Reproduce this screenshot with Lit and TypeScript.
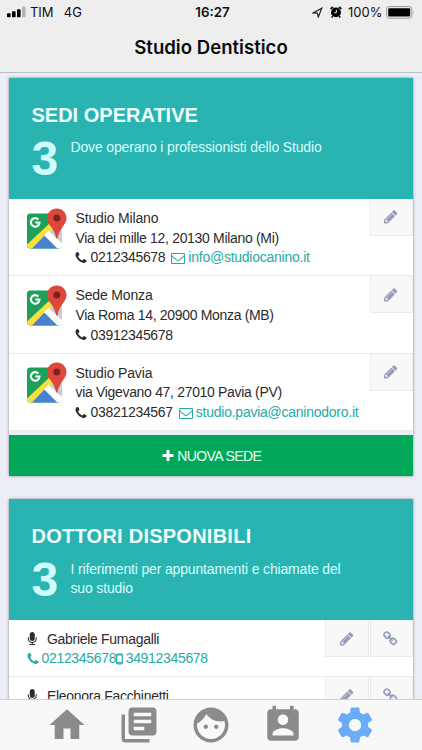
import { LitElement, html, svg, css } from "lit";
import { customElement, property } from "lit/decorators.js";

const fa: Record<string, string> = {
  phone: "M1600 1240q0 27-10 70.5t-21 68.5q-21 50-122 106-94 51-186 51-27 0-53-3.5t-57.5-12.5-47-14.5-55.5-20.5-49-18q-98-35-175-83-127-79-264-216t-216-264q-48-77-83-175-3-9-18-49t-20.5-55.5-14.5-47-12.5-57.5-3.5-53q0-92 51-186 56-101 106-122 25-11 68.5-21t70.5-10q14 0 21 3 18 6 53 76 11 19 30 54t35 63.5 31 53.5q3 4 17.5 25t21.5 35.5 7 28.5q0 20-28.5 50t-62 55-62 53-28.5 46q0 9 5 22.5t8.5 20.5 14 24 11.5 19q76 137 174 235t235 174q2 1 19 11.5t24 14 20.5 8.5 22.5 5q18 0 46-28.5t53-62 55-62 50-28.5q14 0 28.5 7t35.5 21.5 25 17.5q25 15 53.5 31t63.5 35 54 30q70 35 76 53 3 7 3 21z",
  mail: "M1664 1504v-768q-32 36-69 66-268 206-426 338-51 43-83 67t-86.5 48.5-102.5 24.5h-2q-48 0-102.5-24.5t-86.5-48.5-83-67q-158-132-426-338-37-30-69-66v768q0 13 9.5 22.5t22.5 9.5h1472q13 0 22.5-9.5t9.5-22.5zm0-1051v-24.5l-.5-13-3-12.5-5.5-9-9-7.5-14-2.5h-1472q-13 0-22.5 9.5t-9.5 22.5q0 168 147 284 193 152 401 317 6 5 35 29.5t46 37.5 44.5 31.5 50.5 27.5 43 9h2q20 0 43-9t50.5-27.5 44.5-31.5 46-37.5 35-29.5q208-165 401-317 54-43 100.5-115.5t46.5-131.5zm128-37v1088q0 66-47 113t-113 47h-1472q-66 0-113-47t-47-113v-1088q0-66 47-113t113-47h1472q66 0 113 47t47 113z",
  pencil: "M491 1536l91-91-235-235-91 91v107h128v128h107zm523-928q0-22-22-22-10 0-17 7l-542 542q-7 7-7 17 0 22 22 22 10 0 17-7l542-542q7-7 7-17zm-54-192l416 416-832 832h-416v-416zm683 96q0 53-37 90l-166 166-416-416 166-165q36-38 90-38 53 0 91 38l235 234q37 39 37 91z",
  plus: "M1600 736v192q0 40-28 68t-68 28h-416v416q0 40-28 68t-68 28h-192q-40 0-68-28t-28-68v-416h-416q-40 0-68-28t-28-68v-192q0-40 28-68t68-28h416v-416q0-40 28-68t68-28h192q40 0 68 28t28 68v416h416q40 0 68 28t28 68z",
  mic: "M1472 704v128q0 221-147.5 384.5t-364.5 187.5v132h256q26 0 45 19t19 45-19 45-45 19h-640q-26 0-45-19t-19-45 19-45 45-19h256v-132q-217-24-364.5-187.5t-147.5-384.5v-128q0-26 19-45t45-19 45 19 19 45v128q0 185 131.5 316.5t316.5 131.5 316.5-131.5 131.5-316.5v-128q0-26 19-45t45-19 45 19 19 45zm-256-384v512q0 132-94 226t-226 94-226-94-94-226v-512q0-132 94-226t226-94 226 94 94 226z",
  link: "M1456 1216q0-40-28-68l-208-208q-28-28-68-28-42 0-72 32 3 3 19 18.5t21.5 21.5 15 19 13 25.5 3.5 27.5q0 40-28 68t-68 28q-15 0-27.5-3.5t-25.5-13-19-15-21.5-21.5-18.5-19q-33 31-33 73 0 40 28 68l206 207q27 27 68 27 40 0 68-26l147-146q28-28 28-67zm-703-705q0-40-28-68l-206-207q-28-28-68-28-39 0-68 27l-147 146q-28 28-28 67 0 40 28 68l208 208q27 27 68 27 42 0 72-31-3-3-19-18.5t-21.5-21.5-15-19-13-25.5-3.5-27.5q0-40 28-68t68-28q15 0 27.5 3.5t25.5 13 19 15 21.5 21.5 18.5 19q33-31 33-73zm895 705q0 120-85 203l-147 146q-83 83-203 83-121 0-204-85l-206-207q-83-83-83-203 0-123 88-209l-88-88q-86 88-208 88-120 0-204-84l-208-208q-84-84-84-204t85-203l147-146q83-83 203-83 121 0 204 85l206 207q83 83 83 203 0 123-88 209l88 88q86-88 208-88 120 0 204 84l208 208q84 84 84 204z",
};

const icon = (name: string, cls = "") =>
  html`<svg class="fa ${cls}" viewBox="0 0 1792 1792">${svg`<path fill="currentColor" d=${fa[name]} />`}</svg>`;

const mobileIcon = html`<svg class="mobile" viewBox="0 0 7 12" fill="none" stroke="currentColor">
  <rect x=".7" y="1.2" width="5.6" height="9.6" rx=".8" stroke-width="1.2" /><path d="M.7 9.6h5.6M.7 2h5.6" stroke-width="1" />
</svg>`;

const mapIcon = html`<svg class="map" viewBox="0 0 40 42">
  <defs><clipPath id="tile"><rect x="0" y="5.5" width="35" height="35" rx="3" /></clipPath></defs>
  <g clip-path="url(#tile)">
    <path fill="#1fa05a" d="M0 5h36v36H0z" />
    <path fill="#c9cbd0" d="M18 23L36 5v36z" />
    <path fill="#f8df3d" d="M-1 37.5L23 15l4 5L4 43z" />
    <path fill="#4a80d0" d="M4.5 41L17.5 27.5 31 41z" />
    <path fill="#fff" d="M17 27.3l4.5-4.500L38 38v6h-4z" />
  </g>
  <path d="M11.3 11.400a4.300 4.300 0 1 0 1.200 3.100H8.300" fill="none" stroke="#fff" stroke-width="2.100" />
  <path fill="#dc483c" d="M29.8.5c5.5 0 9.700 4.200 9.700 9.600 0 3.900-2.200 6.400-4.400 9.500-2.600 3.700-3.800 6.600-4.500 10.200-.2 1.200-1.400 1.200-1.600 0-.7-3.600-1.900-6.500-4.500-10.200-2.200-3.100-4.400-5.600-4.400-9.500C20.100 4.700 24.300.5 29.800.5z" />
  <circle cx="29.8" cy="9.900" r="3.500" fill="#7d2220" />
</svg>`;

const tabs = [
  "M10 20v-6h4v6h5v-8h3L12 3 2 12h3v8z",
  "M4 6H2v14c0 1.1.9 2 2 2h14v-2H4V6zm16-4H8c-1.1 0-2 .9-2 2v12c0 1.1.9 2 2 2h12c1.1 0 2-.9 2-2V4c0-1.1-.9-2-2-2zm-1 9H9V9h10v2zm-4 4H9v-2h6v2zm4-8H9V5h10v2z",
  "M9 11.75c-.69 0-1.25.56-1.25 1.25s.56 1.25 1.25 1.25 1.25-.56 1.25-1.25-.56-1.25-1.25-1.25zm6 0c-.69 0-1.25.56-1.25 1.25s.56 1.25 1.25 1.25 1.25-.56 1.25-1.25-.56-1.25-1.25-1.25zM12 2C6.48 2 2 6.48 2 12s4.48 10 10 10 10-4.48 10-10S17.52 2 12 2zm0 18c-4.41 0-8-3.59-8-8 0-.29.02-.58.05-.86 2.36-1.05 4.23-2.98 5.21-5.37C11.07 8.33 14.05 10 17.42 10c.78 0 1.53-.09 2.25-.26.21.71.33 1.47.33 2.26 0 4.41-3.59 8-8 8z",
  "M19 3h-1V1h-2v2H8V1H6v2H5c-1.11 0-2 .9-2 2v14c0 1.1.89 2 2 2h14c1.1 0 2-.9 2-2V5c0-1.1-.9-2-2-2zm-7 3c1.66 0 3 1.34 3 3s-1.34 3-3 3-3-1.34-3-3 1.34-3 3-3zm6 12H6v-1c0-2 4-3.1 6-3.1s6 1.1 6 3.1v1z",
  "M19.43 12.98c.04-.32.07-.64.07-.98s-.03-.66-.07-.98l2.11-1.65c.19-.15.24-.42.12-.64l-2-3.46c-.12-.22-.39-.3-.61-.22l-2.49 1c-.52-.4-1.08-.73-1.69-.98l-.38-2.65C14.46 2.18 14.25 2 14 2h-4c-.25 0-.46.18-.49.42l-.38 2.65c-.61.25-1.17.59-1.69.98l-2.49-1c-.23-.09-.49 0-.61.22l-2 3.46c-.13.22-.07.49.12.64l2.11 1.65c-.04.32-.07.65-.07.98s.03.66.07.98l-2.11 1.65c-.19.15-.24.42-.12.64l2 3.46c.12.22.39.3.61.22l2.49-1c.52.4 1.08.73 1.69.98l.38 2.65c.03.24.24.42.49.42h4c.25 0 .46-.18.49-.42l.38-2.65c.61-.25 1.17-.59 1.69-.98l2.49 1c.23.09.49 0 .61-.22l2-3.46c.12-.22.07-.49-.12-.64l-2.11-1.65zM12 15.5c-1.93 0-3.5-1.57-3.5-3.5s1.57-3.5 3.5-3.5 3.5 1.57 3.5 3.5-1.57 3.5-3.5 3.5z",
];

@customElement("status-bar")
class StatusBar extends LitElement {
  static styles = css`
    :host { display: grid; grid-template-columns: 1fr auto 1fr; align-items: center; height: 24px; padding: 0 8px 0 7px; font: 13px Inter, sans-serif; color: #111; }
    .left, .right { display: flex; align-items: center; }
    .right { justify-content: flex-end; }
    .signal { width: 19px; height: 12px; margin-right: 4px; }
    .carrier { margin-right: 10.5px; letter-spacing: -0.1px; }
    .time { font-weight: 600; font-size: 13.3px; padding-left: 4px; }
    .loc { width: 11px; height: 11px; margin-right: 7px; }
    .alarm { width: 12px; height: 12px; margin-right: 6.5px; }
    .pct { margin-right: 3.5px; }
    .battery { width: 29px; height: 13px; margin-right: -1px; }
  `;
  render() {
    return html`
      <div class="left">
        <svg class="signal" viewBox="0 0 19 12">
          <rect x="0" y="7.3" width="3.6" height="4" rx=".8" /><rect x="5" y="5.3" width="3.6" height="6" rx=".8" />
          <rect x="10" y="3.3" width="3.6" height="8" rx=".8" /><rect x="15" y=".5" width="3.6" height="10.8" rx=".8" fill="#b5b5b5" />
        </svg>
        <span class="carrier">TIM</span><span>4G</span>
      </div>
      <div class="time">16:27</div>
      <div class="right">
        <svg class="loc" viewBox="0 0 11 11"><path d="M1 6L9.8 1.2 6.3 10 5.3 6.2z" fill="none" stroke="#222" stroke-width="1.2" /></svg>
        <svg class="alarm" viewBox="0 0 12 12">
          <circle cx="6" cy="6.4" r="4.9" /><path d="M.6 3L3 .9M11.4 3L9 .9M2.8 10l-1 1.4M9.2 10l1 1.4" stroke="#111" stroke-width="1.7" />
          <path d="M6.3 3.8v3H4.2" fill="none" stroke="#eee" />
        </svg>
        <span class="pct">100%</span>
        <svg class="battery" viewBox="0 0 29 13">
          <rect x=".6" y=".6" width="25.2" height="11.6" rx="2.5" fill="none" stroke="#999" />
          <rect x="2.2" y="2.2" width="22" height="8.4" rx="1" /><path d="M27.2 4.700q1.500 1.700 0 3.400z" fill="#999" />
        </svg>
      </div>`;
  }
}

@customElement("card-header")
class CardHeader extends LitElement {
  @property() heading = "";
  @property() count = "";
  @property() text = "";
  static styles = css`
    :host { display: block; box-sizing: border-box; height: 121px; padding: 25px 60px 0 22.5px; background: #29b4b2; color: #d9fdfd; }
    .heading { font-size: 20px; line-height: 24px; font-weight: 700; color: #effffe; white-space: nowrap; }
    :host([wide]) .heading { letter-spacing: 0.25px; }
    .row { display: flex; margin-top: 10px; }
    .count { flex: none; width: 39px; font-size: 48px; line-height: 44px; font-weight: 700; color: #d0fcff; }
    .text { font-size: 14px; line-height: 19px; margin-top: 1.2px; letter-spacing: -0.155px; }
  `;
  render() {
    return html`<div class="heading">${this.heading}</div>
      <div class="row"><div class="count">${this.count}</div><div class="text">${this.text}</div></div>`;
  }
}

const rowStyles = css`
  .fa { width: 14px; height: 14px; flex: none; }
  .info { padding-top: 10px; white-space: nowrap; }
  .line { height: 19.5px; line-height: 19.5px; display: flex; align-items: center; }
  .actions { display: flex; gap: 1px; align-self: flex-start; margin-left: auto; }
  .action { box-sizing: border-box; width: 43.3px; height: 37px; padding-right: 1px; display: flex; align-items: center; justify-content: center; background: #f8f8f8; border: 1px solid #e9ebec; border-top: 0; color: #949db8; }
  .fa.action-icon { width: 15.5px; height: 15.5px; }
  .link { color: #27aaa3; }
`;

@customElement("office-row")
class OfficeRow extends LitElement {
  @property() name = "";
  @property() address = "";
  @property() phone = "";
  @property() mail = "";
  static styles = [rowStyles, css`
    :host { display: flex; box-sizing: border-box; height: 77.3px; padding-left: 17.8px; border-bottom: 1px solid #e9eaec; }
    .map { flex: none; width: 40px; height: 42px; margin: 8.5px 8.7px 0 0; }
    .info { width: 0; flex: 1; }
    .name { letter-spacing: -0.15px; }
    .address { letter-spacing: -0.32px; }
    .contact { height: 20px; }
    .contact > .fa { margin-left: -1px; }
    .phone { margin: 0 6px 0 2px; letter-spacing: -0.3px; }
    .mail { margin-left: 3px; letter-spacing: -0.25px; }
  `];
  render() {
    return html`${mapIcon}
      <div class="info">
        <div class="line name">${this.name}</div>
        <div class="line address">${this.address}</div>
        <div class="line contact">${icon("phone")}<span class="phone">${this.phone}</span>
          ${this.mail ? html`<span class="line link">${icon("mail")}<span class="mail">${this.mail}</span></span>` : ""}</div>
      </div>
      <div class="actions"><div class="action">${icon("pencil", "action-icon")}</div></div>`;
  }
}

@customElement("doctor-row")
class DoctorRow extends LitElement {
  @property() name = "";
  @property() phone = "";
  @property() mobile = "";
  static styles = [rowStyles, css`
    :host { display: flex; box-sizing: border-box; height: 57px; padding-left: 17px; border-bottom: 1px solid #e9eaec; }
    .info { padding-top: 9.3px; }
    .name { margin-left: 7.5px; letter-spacing: -0.3px; }
    .phone, .mobile-number { letter-spacing: -0.32px; }
    .phone { margin-left: 2px; }
    .link > .fa { margin-left: -0.5px; }
    .fa.mic { margin-left: -1px; width: 14.5px; }
    .mobile { width: 7px; height: 12px; margin-right: 2.5px; }
  `];
  render() {
    return html`
      <div class="info">
        <div class="line">${icon("mic", "mic")}<span class="name">${this.name}</span></div>
        ${this.phone ? html`<div class="line link">${icon("phone")}<span class="phone">${this.phone}</span>${mobileIcon}<span class="mobile-number">${this.mobile}</span></div>` : ""}
      </div>
      <div class="actions">
        <div class="action">${icon("pencil", "action-icon")}</div><div class="action">${icon("link", "action-icon")}</div>
      </div>`;
  }
}

@customElement("app-root")
class AppRoot extends LitElement {
  static styles = css`
    :host { display: flex; flex-direction: column; height: 750px; overflow: hidden; background: #ebeef4; font-family: "Liberation Sans", Arial, sans-serif; font-size: 14px; color: #2c2c2c; }
    .top { flex: none; height: 73px; box-sizing: border-box; background: #eee; border-bottom: 1px solid #b9c0ca; }
    .title { height: 47px; text-align: center; font: 600 18.6px/47px Inter, sans-serif; color: #0a0a0a; }
    .content { flex: 1; min-height: 0; overflow: hidden; padding: 5px 9px 0; display: flex; flex-direction: column; gap: 23px; }
    .card { flex: none; background: #fff; box-shadow: 0 0 2.5px rgba(60, 65, 75, 0.6); }
    .add { display: flex; align-items: center; justify-content: center; height: 41.5px; border-top: 4px solid #eaeef3; background: #02a75a; color: #e8fff2; gap: 2.5px; letter-spacing: -0.6px; }
    .fa { width: 14px; height: 14px; color: #fff; }
    .tabs { flex: none; height: 51px; box-sizing: border-box; display: flex; justify-content: center; align-items: center; background: #f8f8f9; border-top: 1.5px solid #cfd0d3; }
    .tab { width: 72px; display: flex; justify-content: center; color: #8b8b8b; }
    .tab svg { width: 42px; height: 42px; }
    .active { color: #6aacf8; }
  `;
  render() {
    return html`
      <div class="top"><status-bar></status-bar><div class="title">Studio Dentistico</div></div>
      <div class="content">
        <section class="card">
          <card-header heading="SEDI OPERATIVE" count="3" text="Dove operano i professionisti dello Studio"></card-header>
          <office-row name="Studio Milano" address="Via dei mille 12, 20130 Milano (Mi)" phone="0212345678" mail="info@studiocanino.it"></office-row>
          <office-row name="Sede Monza" address="Via Roma 14, 20900 Monza (MB)" phone="03912345678"></office-row>
          <office-row name="Studio Pavia" address="via Vigevano 47, 27010 Pavia (PV)" phone="03821234567" mail="studio.pavia@caninodoro.it"></office-row>
          <div class="add">${icon("plus")}<span>NUOVA SEDE</span></div>
        </section>
        <section class="card">
          <card-header wide heading="DOTTORI DISPONIBILI" count="3" text="I riferimenti per appuntamenti e chiamate del suo studio"></card-header>
          <doctor-row name="Gabriele Fumagalli" phone="0212345678" mobile="34912345678"></doctor-row>
          <doctor-row name="Eleonora Facchinetti"></doctor-row>
        </section>
      </div>
      <nav class="tabs">
        ${tabs.map((d, i) => html`<div class="tab ${i === 4 ? "active" : ""}"><svg viewBox="0 0 24 24">${svg`<path fill="currentColor" d=${d} />`}</svg></div>`)}
      </nav>`;
  }
}
